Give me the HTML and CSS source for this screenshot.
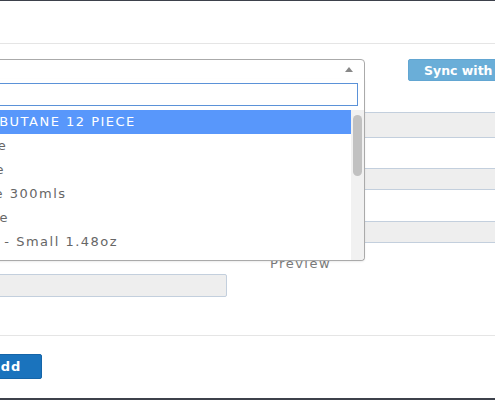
FILE: index.html
```html
<!DOCTYPE html>
<html lang="en">
<head>
<meta charset="utf-8">
<title>Add product</title>
<link rel="stylesheet" href="styles.css">
</head>
<body>
<div class="modal">
  <div class="modal-header"></div>
  <div class="modal-body">
    <div class="top-row">
      <div class="select">
        <span class="caret"></span>
        <div class="dropdown">
          <div class="search-wrap"><input class="search" type="text" aria-label="Search"></div>
          <div class="results">
            <ul class="list">
              <li class="opt active">MAX BUTANE 12 PIECE</li>
              <li class="opt">Flame</li>
              <li class="opt">Stone</li>
              <li class="opt">Large 300mls</li>
              <li class="opt">Single</li>
              <li class="opt">Fluid - Small 1.48oz</li>
              <li class="opt">Refill - Large 4oz</li>
              <li class="opt">Wick</li>
            </ul>
            <div class="scrollbar"><div class="thumb"></div></div>
          </div>
        </div>
      </div>
      <button class="sync" type="button">Sync with POS</button>
    </div>
    <div class="fields">
      <div class="field field-tall"></div>
      <div class="field"></div>
      <div class="field"></div>
    </div>
    <div class="preview-label">Preview</div>
    <div class="readonly"></div>
  </div>
  <div class="modal-footer">
    <button class="add" type="button">Add</button>
  </div>
</div>
</body>
</html>
```
FILE: styles.css
```css
html, body {
  margin: 0;
  padding: 0;
}
body {
  width: 495px;
  height: 400px;
  overflow: hidden;
  background: #ffffff;
  font-family: "DejaVu Sans", sans-serif;
  font-size: 13px;
  color: #555;
  border-top: 1px solid #3d414b;
  box-sizing: border-box;
  position: relative;
}
body::after {
  content: "";
  position: absolute;
  left: 0;
  right: 0;
  bottom: 0;
  height: 2px;
  background: #3d414b;
}
.modal {
  margin-left: -47px;
  width: 620px;
}
.modal-header {
  height: 42px;
  border-bottom: 1px solid #e5e5e5;
}
.modal-body {
  padding-top: 15px;
}
.top-row {
  display: flex;
  align-items: flex-start;
}
.select {
  position: relative;
  box-sizing: border-box;
  width: 412px;
  height: 21px;
  border: 1px solid #aaa;
  border-radius: 4px 4px 0 0;
  display: flex;
  justify-content: flex-end;
  align-items: center;
  padding-right: 11px;
}
.caret {
  width: 0;
  height: 0;
  border-style: solid;
  border-width: 0 4px 5px 4px;
  border-color: transparent transparent #888 transparent;
}
.dropdown {
  position: absolute;
  top: 19px;
  left: -1px;
  right: -1px;
  z-index: 5;
  background: #fff;
  border: 1px solid #aaa;
  border-top: 0;
  border-radius: 0 0 4px 4px;
  box-shadow: 0 1px 2px rgba(0,0,0,0.08);
}
.search-wrap {
  padding: 4px 6px 4px 4px;
}
.search {
  display: block;
  box-sizing: border-box;
  width: 100%;
  height: 23px;
  margin: 0;
  border: 1px solid #5b92d8;
  outline: none;
  background: #fff;
}
.results {
  display: flex;
  height: 150px;
}
.list {
  flex: 1;
  list-style: none;
  margin: 0;
  padding: 0;
  overflow: hidden;
}
.scrollbar {
  width: 13px;
  background: #f1f1f1;
  border-bottom-right-radius: 4px;
}
.thumb {
  margin: 5px 2px 0 2px;
  height: 61px;
  border-radius: 5px;
  background: #c1c1c1;
}
.opt {
  height: 24px;
  line-height: 24px;
  padding-left: 6px;
  white-space: nowrap;
  letter-spacing: 1.5px;
  color: #666;
}
.opt.active {
  background: #5897fb;
  color: #fff;
}
.sync {
  margin-left: 43px;
  height: 22px;
  width: 140px;
  padding: 0 0 0 15px;
  text-align: left;
  border: 1px solid #62a6d2;
  border-radius: 2px;
  background: #6aaed8;
  color: #fff;
  font-family: "DejaVu Sans", sans-serif;
  font-weight: bold;
  font-size: 12.5px;
}
.fields {
  margin-left: 317px;
  margin-top: 31px;
}
.field {
  box-sizing: border-box;
  height: 22px;
  margin-top: 31px;
  background: #eeeeee;
  border: 1px solid #c3cfdd;
  border-radius: 2px;
}
.field-tall {
  height: 26px;
  margin-top: 0;
}
.field-tall + .field {
  margin-top: 30px;
}
.preview-label {
  margin-left: 317px;
  margin-top: 12px;
  height: 18px;
  line-height: 18px;
  letter-spacing: 1.5px;
  color: #7a7a7a;
}
.readonly {
  box-sizing: border-box;
  margin-top: 1px;
  width: 274px;
  height: 23px;
  background: #eeeeee;
  border: 1px solid #c3cfdd;
  border-radius: 2px;
}
.modal-footer {
  margin-top: 38px;
  border-top: 1px solid #e5e5e5;
  padding-top: 18px;
}
.add {
  margin-left: 16px;
  height: 25px;
  width: 73px;
  border: 1px solid #1565a8;
  border-radius: 2px;
  background: #1a73bd;
  color: #fff;
  font-family: "DejaVu Sans", sans-serif;
  font-weight: bold;
  font-size: 13px;
  letter-spacing: 1px;
}
```
